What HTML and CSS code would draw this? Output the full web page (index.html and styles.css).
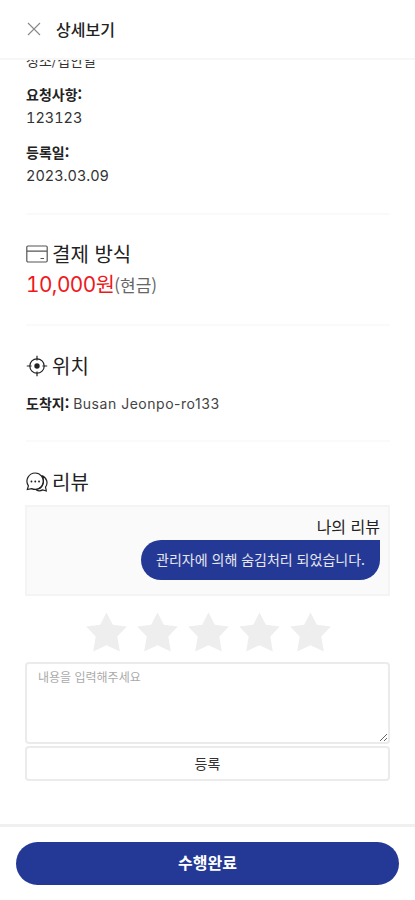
FILE: index.html
```html
<!DOCTYPE html>
<html lang="ko">
<head>
<meta charset="utf-8">
<meta name="viewport" content="width=device-width, initial-scale=1">
<title>상세보기</title>
<link rel="stylesheet" href="styles.css">
</head>
<body>
<div class="app">
  <header class="topbar">
    <svg class="close" viewBox="0 0 14 14"><path d="M1 1 L13 13 M13 1 L1 13"/></svg>
    <h1>상세보기</h1>
  </header>
  <main class="content">
    <section class="info">
      <p class="value category">청소/집안일</p>
      <p class="label">요청사항:</p>
      <p class="value number">123123</p>
      <p class="label">등록일:</p>
      <p class="value number date">2023.03.09</p>
    </section>
    <section class="payment">
      <h2>
        <svg class="icon" viewBox="0 0 22 22"><rect x=".8" y="3" width="20.4" height="16" rx="1.2"/><path d="M1 8.2H21M14.5 15.5H18"/></svg>
        <span>결제 방식</span>
      </h2>
      <p class="price"><span class="amount">10,000<span class="won">원</span></span><span class="method">(현금)</span></p>
    </section>
    <section class="place">
      <h2>
        <svg class="icon dark" viewBox="0 0 22 22"><circle cx="11" cy="11" r="7.2"/><circle class="dot" cx="11" cy="11" r="2.7"/><path d="M11 .8V5.6M11 16.4V21.2M.8 11H5.6M16.4 11H21.2"/></svg>
        <span>위치</span>
      </h2>
      <p class="address"><b>도착지:</b> <span class="latin">Busan Jeonpo-ro133</span></p>
    </section>
    <section class="review">
      <h2>
        <svg class="icon dark" viewBox="0 0 22 22"><path d="M9.2 2a8.2 8.2 0 1 1-3.6 15.6L1.3 18.5 2.4 14.8A8.2 8.2 0 0 1 9.2 2Z"/><path d="M15.6 4.6C20.8 6.3 22.5 12 19.5 16.2L20.3 20 16.7 18.9C14.7 20 12 20 10 18.7M15.6 4.6C18.8 8.5 17.8 15.5 12.5 18"/><path class="dots" d="M5.4 10.5H5.5M9.2 10.5H9.3M13 10.5H13.1"/></svg>
        <span>리뷰</span>
      </h2>
      <div class="thread">
        <p class="author">나의 리뷰</p>
        <p class="bubble">관리자에 의해 숨김처리 되었습니다.</p>
      </div>
      <div class="stars">
        <svg viewBox="0 0 41 40"><path d="M20.5 .5 26.8 12.8 40.8 14.6 31.3 24.6 33.8 39.5 20.5 33.2 7.2 39.5 9.7 24.6 .2 14.6 14.2 12.8Z"/></svg>
        <svg viewBox="0 0 41 40"><path d="M20.5 .5 26.8 12.8 40.8 14.6 31.3 24.6 33.8 39.5 20.5 33.2 7.2 39.5 9.7 24.6 .2 14.6 14.2 12.8Z"/></svg>
        <svg viewBox="0 0 41 40"><path d="M20.5 .5 26.8 12.8 40.8 14.6 31.3 24.6 33.8 39.5 20.5 33.2 7.2 39.5 9.7 24.6 .2 14.6 14.2 12.8Z"/></svg>
        <svg viewBox="0 0 41 40"><path d="M20.5 .5 26.8 12.8 40.8 14.6 31.3 24.6 33.8 39.5 20.5 33.2 7.2 39.5 9.7 24.6 .2 14.6 14.2 12.8Z"/></svg>
        <svg viewBox="0 0 41 40"><path d="M20.5 .5 26.8 12.8 40.8 14.6 31.3 24.6 33.8 39.5 20.5 33.2 7.2 39.5 9.7 24.6 .2 14.6 14.2 12.8Z"/></svg>
      </div>
      <textarea placeholder="내용을 입력해주세요"></textarea>
      <button class="submit">등록</button>
    </section>
  </main>
  <footer class="bottombar"><button class="done">수행완료</button></footer>
</div>
</body>
</html>
```

FILE: styles.css
```css
* { box-sizing: border-box; margin: 0; padding: 0; }
body { background: #fff; color: #222; font-family: "Noto Sans CJK KR", sans-serif; }
button, textarea { font-family: inherit; }
.app { display: flex; flex-direction: column; height: 900px; overflow: hidden; }

.topbar { display: flex; align-items: center; gap: 15px; flex: none; height: 60px; padding-left: 27px; border-bottom: 2px solid #f7f7f7; }
.close { width: 14px; height: 14px; fill: none; stroke: #888; stroke-width: 1.1; }
h1 { font-size: 16px; font-weight: 500; line-height: 22px; }

.content { flex: 1; min-height: 0; overflow: hidden; padding: 0 25px 0 26px; }
section { border-bottom: 2px solid #fafafa; }
.info { display: flow-root; height: 155px; }
.category { margin-top: -12px; height: 34px; line-height: 24px; font-size: 14px; }
.label { font-size: 14px; font-weight: 700; line-height: 24px; }
.value { color: #333; }
.number { height: 34px; font-family: Inter, "Noto Sans CJK KR", sans-serif; font-size: 14.5px; line-height: 24px; font-variant-numeric: tabular-nums; }

h2 { display: flex; align-items: center; gap: 4px; height: 28px; font-size: 20px; font-weight: 400; line-height: 28px; }
h2 span { padding-bottom: 1px; }
.icon { width: 22px; height: 22px; fill: none; stroke: #555; stroke-width: 1.2; }
.icon.dark { stroke: #222; }
.dot { fill: #222; stroke: none; }
.dots { stroke-width: 1.8; stroke-linecap: round; }

.payment { height: 111px; padding-top: 25px; }
.price { display: flex; align-items: center; height: 34px; }
.amount { color: #f01720; font-family: Inter, "Noto Sans CJK KR", sans-serif; font-size: 20.8px; line-height: 34px; letter-spacing: -.55px; font-variant-numeric: tabular-nums; }
.method { color: #666; font-size: 17px; line-height: 34px; }

.place { height: 116px; padding-top: 26px; }
.address { margin-top: 11px; font-size: 14px; line-height: 24px; white-space: nowrap; }
.latin { color: #444; font-family: Inter, "Noto Sans CJK KR", sans-serif; letter-spacing: .52px; }

.review { padding-top: 26px; border: 0; }
.thread { display: flex; flex-direction: column; align-items: flex-end; height: 91px; margin-top: 9px; margin-left: -1px; padding: 8px 8px 0; background: #fafafa; border: 2px solid #f4f4f4; }
.author { height: 25px; font-size: 16px; line-height: 23px; }
.bubble { width: 239px; height: 40px; border-radius: 20px 0 20px 20px; background: #243996; color: #e6e6ee; font-size: 14px; line-height: 38px; text-align: center; white-space: nowrap; }
.stars { display: flex; justify-content: center; gap: 10px; height: 66px; padding-top: 16px; }
.stars svg { width: 41px; height: 40px; fill: #eee; }
textarea { display: block; width: calc(100% + 1px); height: 82px; margin-left: -1px; padding: 2px 11px; border: 2px solid #ebebeb; border-radius: 4px; background: #fff; font-size: 12px; line-height: 22px; outline: 0; }
textarea::placeholder { color: #aaa; }
.submit { display: block; width: calc(100% + 1px); height: 35px; margin: 2px 0 0 -1px; padding-bottom: 2px; border: 2px solid #ebebeb; border-radius: 4px; background: #fff; color: #333; font-size: 14px; line-height: 28px; }

.bottombar { flex: none; height: 76px; padding: 15px 16px 0; border-top: 3px solid #f0f0f0; }
.done { display: block; width: 383px; height: 43px; padding-bottom: 3px; border: 0; border-radius: 22px; background: #243996; color: #fff; font-size: 16px; font-weight: 700; line-height: 38px; }
```
